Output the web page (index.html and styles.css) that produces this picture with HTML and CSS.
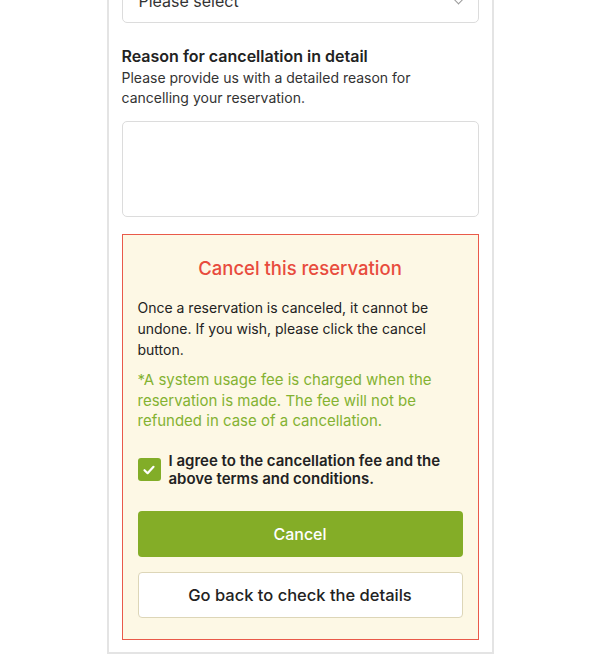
FILE: index.html
```html
<!DOCTYPE html>
<html lang="en">
<head>
<meta charset="utf-8">
<link rel="stylesheet" href="styles.css">
</head>
<body>
<div class="page">
  <div class="select">
    <span>Please select</span>
    <span class="arrow"></span>
  </div>
  <h2 class="field-title">Reason for cancellation in detail</h2>
  <p class="field-desc">Please provide us with a detailed reason for cancelling your reservation.</p>
  <div class="textarea"></div>
  <section class="cancel-box">
    <h3 class="cancel-title">Cancel this reservation</h3>
    <p class="cancel-text">Once a reservation is canceled, it cannot be undone. If you wish, please click the cancel button.</p>
    <p class="cancel-note">*A system usage fee is charged when the reservation is made. The fee will not be refunded in case of a cancellation.</p>
    <label class="agree">
      <span class="check">
        <svg width="14" height="14" viewBox="0 0 14 14"><path d="M2.5 7.2 L5.6 10.2 L11.5 3.8" fill="none" stroke="#fff" stroke-width="2.2" stroke-linecap="round" stroke-linejoin="round"/></svg>
      </span>
      <span class="agree-text">I agree to the cancellation fee and the above terms and conditions.</span>
    </label>
    <button class="btn btn-primary">Cancel</button>
    <button class="btn btn-secondary">Go back to check the details</button>
  </section>
</div>
</body>
</html>
```
FILE: styles.css
```css
* { box-sizing: border-box; }
html, body { margin: 0; padding: 0; background: #fff; }
body {
  font-family: Inter, "Liberation Sans", sans-serif;
  color: #222;
  height: 656px;
  overflow: hidden;
}
.page {
  width: 387px;
  margin: -21px auto 0;
  border: 2px solid #e4e4e4;
  border-top: none;
  padding: 0 13px 12px;
  display: flex;
  flex-direction: column;
}
.select {
  height: 44px;
  border: 1px solid #dcdcdc;
  border-radius: 5px;
  display: flex;
  align-items: center;
  justify-content: space-between;
  padding: 0 16px;
  font-size: 16px;
  color: #333;
}
.arrow {
  width: 7px; height: 7px;
  border-right: 1.5px solid #999;
  border-bottom: 1.5px solid #999;
  transform: rotate(45deg);
  margin-top: -4px;
}
.field-title {
  margin: 21px 0 0;
  font-size: 16px;
  line-height: 24px;
  font-weight: 600;
  color: #222;
}
.field-desc {
  margin: 0;
  padding-right: 40px;
  font-size: 14px;
  line-height: 20px;
  color: #333;
}
.textarea {
  margin-top: 13px;
  height: 96px;
  border: 1px solid #dcdcdc;
  border-radius: 5px;
  background: #fff;
}
.cancel-box {
  margin-top: 17px;
  border: 1px solid #e95a4a;
  background: #fdf8e5;
  padding: 20px 15px 21px;
  display: flex;
  flex-direction: column;
}
.cancel-title {
  margin: 0;
  text-align: center;
  font-size: 18.5px;
  line-height: 27px;
  font-weight: 500;
  color: #e84c3d;
}
.cancel-text {
  margin: 15px 0 0;
  font-size: 14px;
  line-height: 21px;
  color: #222;
}
.cancel-note {
  margin: 10px 0 0;
  font-size: 15px;
  line-height: 20.5px;
  color: #84b232;
}
.agree {
  margin-top: 20px;
  display: flex;
  align-items: center;
  gap: 8px;
}
.check {
  flex: 0 0 23px;
  width: 23px;
  height: 23px;
  border-radius: 3px;
  background: #82ad28;
  display: flex;
  align-items: center;
  justify-content: center;
}
.agree-text {
  font-size: 15px;
  line-height: 18px;
  font-weight: 600;
  color: #222;
}
.btn {
  font-family: inherit;
  width: 100%;
  height: 46px;
  border-radius: 4px;
  font-size: 16px;
  cursor: pointer;
}
.btn-primary {
  margin-top: 23px;
  background: #84ad27;
  border: none;
  color: #fff;
  font-weight: 500;
}
.btn-secondary {
  margin-top: 15px;
  background: #fff;
  border: 1px solid #ddd6b8;
  color: #222;
  font-weight: 500;
  font-size: 16.5px;
}
```
